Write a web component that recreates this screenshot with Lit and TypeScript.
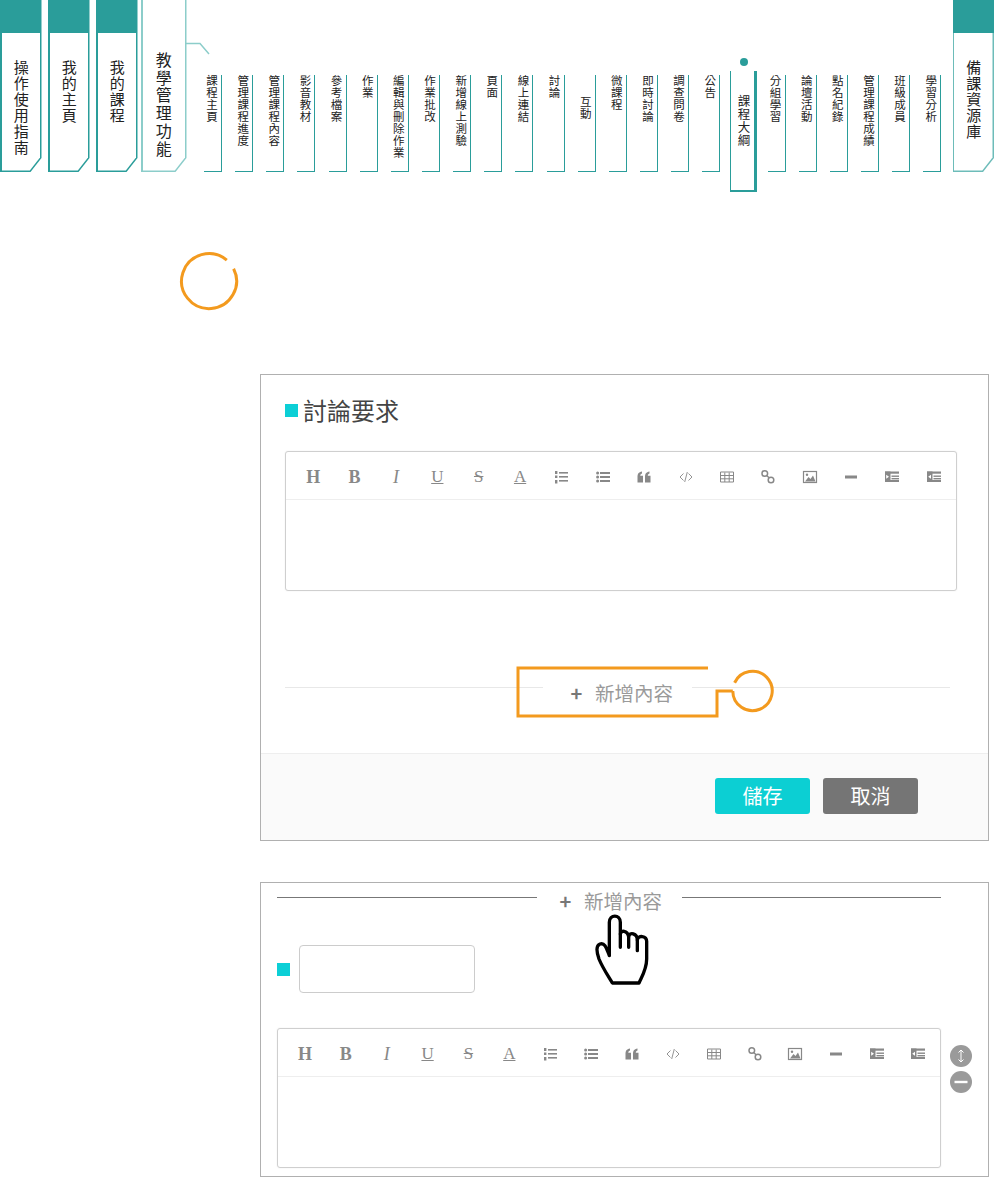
import { LitElement, html, css, svg } from "lit";
import { customElement, property } from "lit/decorators.js";

const FONT = css`"Noto Sans CJK TC", "Noto Sans", sans-serif`;

const indentBase = svg`<rect x="1" y="2.5" width="14" height="2.2"/><rect x="1" y="2.5" width="5.5" height="10"/><rect x="7.5" y="6.5" width="7.5" height="1.4"/><rect x="7.5" y="9" width="7.5" height="1.4"/><rect x="1" y="11" width="14" height="2"/>`;

const glyphs = [
  svg`<rect x="6" y="3" width="9" height="1.6"/><rect x="6" y="7" width="9" height="1.6"/><rect x="6" y="11" width="9" height="1.6"/><rect x="2" y="2" width="2.4" height="3"/><rect x="2" y="6.5" width="2.4" height="2.5"/><rect x="2" y="11" width="2.4" height="3.5"/>`,
  svg`<rect x="5" y="3" width="10" height="2"/><rect x="5" y="7" width="10" height="2"/><rect x="5" y="11" width="10" height="2"/><circle cx="2.6" cy="4" r="1.5"/><circle cx="2.6" cy="8" r="1.5"/><circle cx="2.6" cy="12" r="1.5"/>`,
  svg`<path d="M1.5 8c0-3 1-5 4.500-5.500v2C4.500 5 4.300 5.800 4.300 6.800H7V13.500H1.500zM9 8c0-3 1-5 4.500-5.500v2c-1.500.5-1.700 1.300-1.700 2.300h2.700V13.500H9z"/>`,
  svg`<path d="M5.500 4.500 2 8l3.500 3.500M10.500 4.500 14 8l-3.500 3.500M9.300 3 6.700 13" fill="none" stroke="currentColor" stroke-width=".9"/>`,
  svg`<path d="M1.500 3h13v10h-13zM1.500 6.500h13M1.500 9.800h13M5.800 3.500V13M10.200 3.500V13" fill="none" stroke="currentColor" stroke-width="1"/>`,
  svg`<g fill="none" stroke="currentColor" stroke-width="1.500"><circle cx="4.800" cy="4.500" r="2.800"/><circle cx="11" cy="11" r="2.800"/><path d="m7 6.700 2 2"/></g>`,
  svg`<rect x="1.500" y="2.500" width="13" height="11" fill="none" stroke="currentColor" stroke-width="1.200"/><path d="m3 12.500 3.500-4.500 2 2 2.500-3.500 2.500 6z"/><circle cx="5" cy="5.800" r="1.200"/>`,
  svg`<rect x="2" y="6.500" width="12" height="3"/>`,
  svg`${indentBase}<path d="M2.200 5.800 5 7.800 2.200 9.800z" fill="#fff"/>`,
  svg`${indentBase}<path d="M5 5.800 2.200 7.800 5 9.800z" fill="#fff"/>`,
];

@customElement("rich-editor")
class RichEditor extends LitElement {
  static styles = css`
    :host { display: block; flex: 1; }
    .box { height: 140px; box-sizing: border-box; border: 1px solid #cfcfcf; border-radius: 3px; background: #fff; box-shadow: 0 0 2px #eee; }
    .bar { height: 48px; box-sizing: border-box; border-bottom: 1px solid #eee; padding: 2px 1.5px 0 6.5px; display: grid; grid-template-columns: repeat(16, 1fr); align-items: center; color: #888; }
    .cell { display: flex; justify-content: center; align-items: center; height: 100%; font: 18px/1 "Liberation Serif", serif; }
    .b { font-weight: 700; }
    .i { font-style: italic; }
    .u { text-decoration: underline; font-size: 17px; }
    .s { text-decoration: line-through; font-size: 17px; }
    svg { width: 16px; height: 16px; fill: currentColor; }
  `;
  render() {
    return html`<div class="box"><div class="bar">
      <span class="cell b">H</span><span class="cell b">B</span><span class="cell i">I</span>
      <span class="cell u">U</span><span class="cell s">S</span><span class="cell u">A</span>
      ${glyphs.map((g) => html`<span class="cell"><svg viewBox="0 0 16 16">${g}</svg></span>`)}
    </div></div>`;
  }
}

@customElement("add-row")
class AddRow extends LitElement {
  @property({ reflect: true }) variant = "soft";
  static styles = css`
    :host { display: flex; align-items: flex-start; font-family: ${FONT}; }
    .line { flex: 1; height: 1px; margin-top: 6px; background: #e8e8e8; }
    :host([variant="dark"]) .line { background: #777; margin-top: 8px; }
    .label { display: flex; align-items: center; gap: 13px; height: 24px; padding: 0 19px 0 28px; color: #9a9a9a; font-size: 19.5px; line-height: 24px; white-space: nowrap; }
    :host([variant="dark"]) .label { padding: 0 19.5px 0 23.5px; }
    .plus { color: #777; font-size: 20px; font-weight: 700; width: 11px; display: flex; justify-content: center; }
  `;
  render() {
    return html`<div class="line"></div>
      <div class="label"><span class="plus">+</span><span>新增內容</span></div>
      <div class="line"></div>`;
  }
}

const subs = ["課程主頁","管理課程進度","管理課程內容","影音教材","參考檔案","作業","編輯與刪除作業","作業批改","新增線上測驗","頁面","線上連結","討論","互動","微課程","即時討論","調查問卷","公告","課程大綱","分組學習","論壇活動","點名紀錄","管理課程成績","班級成員","學習分析"];

@customElement("app-root")
class AppRoot extends LitElement {
  static styles = css`
    :host { display: block; width: 995px; padding-bottom: 1px; background: #fff; font-family: ${FONT}; color: #222; }
    .nav { position: relative; display: flex; align-items: flex-start; height: 192px; padding-right: 1px; box-sizing: border-box; }
    .tab { width: 41.5px; height: 172px; background: #2a9d9a; box-sizing: border-box; padding: 33px 1.5px 1.5px; clip-path: polygon(0 0, 100% 0, 100% 158px, calc(100% - 11px) 100%, 0 100%); margin-right: 6.5px; flex: none; }
    .tab.open { width: 45.5px; margin: 0 0 0 -3px; padding-top: 0; background: #8ccdca; }
    .tab.last { margin: 0 0 0 auto; background: #6dbcb9; padding-top: 0; }
    .last-top { height: 33px; margin: 0 -1.5px; background: #2a9d9a; }
    .inner { background: #fff; height: 100%; box-sizing: border-box; display: flex; justify-content: center; padding-top: 27px; clip-path: polygon(0 0, 100% 0, 100% calc(100% - 13px), calc(100% - 10.2px) 100%, 0 100%); }
    .tab.last .inner { height: 137.5px; }
    .tab.open .inner { padding-top: 52px; }
    .v { writing-mode: vertical-rl; font-size: 15px; letter-spacing: 1px; line-height: 20px; white-space: nowrap; color: #222; font-kerning: none; }
    .tab.open .v { font-size: 16px; letter-spacing: 1.7px; line-height: 22px; }
    .subs { display: flex; gap: 13.15px; margin: 75px 0 0 17.5px; }
    .sub { position: relative; width: 18px; height: 97px; box-sizing: border-box; border-right: 1px solid #2a9d9a; border-bottom: 1px solid #2a9d9a; font-size: 11.5px; letter-spacing: .5px; line-height: 13px; writing-mode: vertical-rl; white-space: nowrap; padding-right: 3px; flex: none; font-kerning: none; }
    .sub.push { padding-top: 21px; }
    .sub.on { width: 27px; height: 121px; margin: -4px -3px 0; border: 0 solid #2a9d9a; border-width: 0 3px 2.5px 1.5px; font-size: 12.5px; padding: 24px 3px 0 0; line-height: 16px; }
    .dot { position: absolute; left: 8.5px; top: -13px; width: 8px; height: 8px; border-radius: 50%; background: #2a9d9a; }
    .wire { position: absolute; left: 186px; top: 42px; width: 24px; height: 14px; fill: none; stroke: #8ccdca; stroke-width: 1.5; }
    .main { position: relative; padding: 182px 6px 0 260px; display: flex; flex-direction: column; gap: 41px; }
    .ring { position: absolute; left: 178px; top: 58px; width: 62px; height: 62px; fill: none; stroke: #f39a1e; stroke-width: 3; }
    .panel { position: relative; border: 1px solid #b0b0b0; background: #fff; }
    .body { padding: 22px 38px 48px 24px; }
    .title { display: flex; align-items: center; gap: 5px; height: 26px; font-size: 24px; line-height: 26px; color: #444; }
    .sq { flex: none; width: 13px; height: 13px; background: #0ccfd6; }
    .ed1 { margin: 28px -7px 0 0; }
    .add1 { margin-top: 90px; }
    .foot { border-top: 1px solid #eee; background: #fafafa; height: 87px; box-sizing: border-box; padding: 24px 70px 0 0; display: flex; justify-content: flex-end; gap: 13px; }
    .btn { width: 95px; height: 36px; border-radius: 3px; color: #fff; font-size: 20px; line-height: 36px; text-align: center; }
    .save { background: #0ccfd3; }
    .cancel { background: #757575; }
    .bracket { position: absolute; left: 255px; top: 290px; width: 270px; height: 60px; fill: none; stroke: #f39a1e; stroke-width: 3; }
    .body2 { padding: 6px 47px 8px 16px; }
    .field { display: flex; align-items: center; gap: 9px; margin: 32px 0 35px; }
    .input { width: 176px; height: 48px; box-sizing: border-box; border: 1px solid #ccc; border-radius: 4px; }
    .edrow { display: flex; gap: 9px; margin-right: -31px; }
    .side { display: flex; flex-direction: column; gap: 4px; padding-top: 17px; }
    .side svg { display: block; width: 22px; height: 22px; }
    .hand { position: absolute; left: 333px; top: 31px; width: 55px; height: 72px; }
  `;

  render() {
    return html`
      <div class="nav">
        <div class="tab"><div class="inner"><span class="v">操作使用指南</span></div></div>
        <div class="tab"><div class="inner"><span class="v">我的主頁</span></div></div>
        <div class="tab"><div class="inner"><span class="v">我的課程</span></div></div>
        <div class="tab open"><div class="inner"><span class="v">教學管理功能</span></div></div>
        <div class="subs">
          ${subs.map((s) => html`<div class="sub ${s === "課程大綱" ? "on" : ""} ${s === "互動" ? "push" : ""}">${s === "課程大綱" ? html`<i class="dot"></i>` : ""}${s}</div>`)}
        </div>
        <div class="tab last"><div class="last-top"></div><div class="inner"><span class="v">備課資源庫</span></div></div>
        <svg class="wire" viewBox="0 0 24 14"><path d="M0 1.5H14L23 12"/></svg>
      </div>
      <div class="main">
        <svg class="ring" viewBox="0 0 62 62"><path d="M55.6 18.7A27.5 27.5 0 1 1 48.8 10.1"/></svg>
        <section class="panel">
          <div class="body">
            <div class="title"><i class="sq"></i>討論要求</div>
            <div class="ed1"><rich-editor></rich-editor></div>
            <add-row class="add1"></add-row>
          </div>
          <div class="foot"><div class="btn save">儲存</div><div class="btn cancel">取消</div></div>
          <svg class="bracket" viewBox="0 0 270 60"><path d="M192 3H2V51H201V26H216.8M218.6 17.75A19.7 19.7 0 1 1 216.8 26"/></svg>
        </section>
        <section class="panel">
          <div class="body2">
            <add-row variant="dark"></add-row>
            <div class="field"><i class="sq"></i><div class="input"></div></div>
            <div class="edrow">
              <rich-editor></rich-editor>
              <div class="side">
                <svg viewBox="0 0 22 22"><circle cx="11" cy="11" r="11" fill="#9a9a9a"/><path d="M11 5v12M8.5 7.5 11 5l2.5 2.5M8.5 14.5 11 17l2.5-2.5" fill="none" stroke="#fff" stroke-width="1"/></svg>
                <svg viewBox="0 0 22 22"><circle cx="11" cy="11" r="11" fill="#9a9a9a"/><rect x="4.5" y="9.8" width="13" height="2.4" fill="#fff"/></svg>
              </div>
            </div>
          </div>
          <svg class="hand" viewBox="190 100 165 216" fill="#fff" stroke="#000" stroke-width="10" stroke-linejoin="round" stroke-linecap="round">
            <path d="M245 307H325C335 285 348 265 348 235V182C348 165 322 162 320 178C320 158 296 152 294 168C290 148 270 148 269 160V125C269 100 236 100 236 125V225C228 205 224 185 208 190C195 195 198 215 205 235C215 260 232 285 245 307Z"/>
            <path d="M320 178V210M294 168V200M269 160V200" fill="none"/>
          </svg>
        </section>
      </div>
    `;
  }
}
